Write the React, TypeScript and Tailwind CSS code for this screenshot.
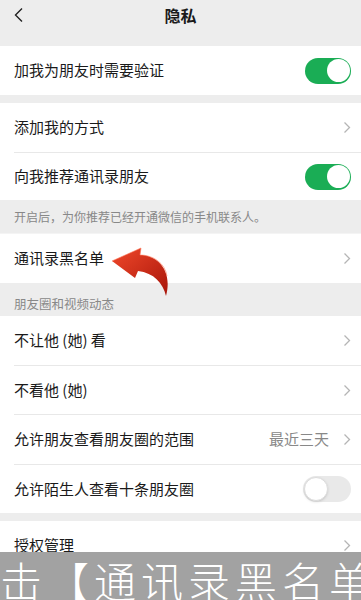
import React from 'react';

const font = { fontFamily: '"Noto Sans CJK SC", "Noto Sans", sans-serif' };

const Chevron = () => (
  <svg width="8" height="13" viewBox="0 0 8 13" className="shrink-0">
    <path d="M1.5 1.5 L6.5 6.5 L1.5 11.5" fill="none" stroke="#b5b5b5" strokeWidth="1.3" />
  </svg>
);

const Toggle = ({ on }: { on: boolean }) =>
  on ? (
    <div className="w-[46px] h-[26px] rounded-full bg-[#1aad55] flex items-center justify-end pr-[1.5px]">
      <div className="w-[23px] h-[23px] rounded-full bg-white" />
    </div>
  ) : (
    <div className="w-[48px] h-[26px] rounded-full bg-[#e9e9e9] flex items-center pl-[1px]">
      <div className="w-[24px] h-[24px] rounded-full bg-white border border-[#dcdcdc] shadow-sm" />
    </div>
  );

const Row = ({
  label,
  right,
  divider = false,
  h = 'h-[49px]',
}: {
  label: string;
  right: React.ReactNode;
  divider?: boolean;
  h?: string;
}) => (
  <div className="bg-white pl-[14px]">
    <div className={`${h} flex items-center justify-between pr-[10px] ${divider ? 'border-t border-[#e8e8e8]' : ''}`}>
      <span className="text-[15px] text-[#1a1a1a]">{label}</span>
      {right}
    </div>
  </div>
);

export default function App() {
  return (
    <div className="relative w-[361px] h-[600px] overflow-hidden bg-[#ededed]" style={font}>
      {/* header */}
      <div className="h-[30px] flex items-center relative">
        <svg width="12" height="16" viewBox="0 0 12 16" className="absolute left-[13px] top-[7px]">
          <path d="M9 1.5 L2.5 8 L9 14.5" fill="none" stroke="#222" strokeWidth="1.4" />
        </svg>
        <div className="flex-1 text-center text-[16px] font-semibold text-[#1a1a1a]">隐私</div>
      </div>
      <div className="h-[16px]" />

      <Row label="加我为朋友时需要验证" right={<Toggle on />} />
      <div className="h-[8px]" />
      <Row label="添加我的方式" right={<Chevron />} />
      <Row label="向我推荐通讯录朋友" right={<Toggle on />} divider h="h-[48px]" />
      <div className="h-[33px] flex items-center pl-[14px] text-[12px] text-[#888]">
        开启后，为你推荐已经开通微信的手机联系人。
      </div>
      <div className="h-px bg-[#f4f4f4]" />
      <Row label="通讯录黑名单" right={<Chevron />} />
      <div className="h-[33px] flex items-center pl-[14px] pt-[10px] text-[12.5px] text-[#888]">
        朋友圈和视频动态
      </div>
      <Row label="不让他 (她) 看" right={<Chevron />} />
      <Row label="不看他 (她)" right={<Chevron />} divider />
      <Row
        label="允许朋友查看朋友圈的范围"
        right={
          <div className="flex items-center gap-[14px]">
            <span className="text-[15px] text-[#888]">最近三天</span>
            <Chevron />
          </div>
        }
        divider
        h="h-[50px]"
      />
      <Row label="允许陌生人查看十条朋友圈" right={<Toggle on={false} />} divider />
      <div className="h-[8px]" />
      <Row label="授权管理" right={<Chevron />} h="h-[49px]" />

      {/* red arrow */}
      <svg width="70" height="60" viewBox="0 0 70 60" className="absolute left-[105px] top-[244px]">
        <defs>
          <linearGradient id="ar" x1="0" y1="0" x2="1" y2="1">
            <stop offset="0" stopColor="#f0482a" />
            <stop offset="1" stopColor="#a8150a" />
          </linearGradient>
        </defs>
        <path
          d="M7 17 L36 4 L35 11 C52 11 68 26 61 52 C58 39 49 29 33 27 L30 34 Z"
          fill="url(#ar)"
        />
        <path d="M7 17 L36 4 L35 11 C48 11 60 19 62 32" fill="none" stroke="#ff7a5c" strokeWidth="1" opacity="0.6" />
      </svg>

      {/* caption overlay */}
      <div className="absolute left-0 right-0 top-[552px] h-[48px] bg-[#a2a2a2] overflow-hidden">
        <div className="whitespace-nowrap text-white text-[42px] font-light leading-[42px] mt-[7px] tracking-[5px]">
          击【通讯录黑名单
        </div>
      </div>
    </div>
  );
}
